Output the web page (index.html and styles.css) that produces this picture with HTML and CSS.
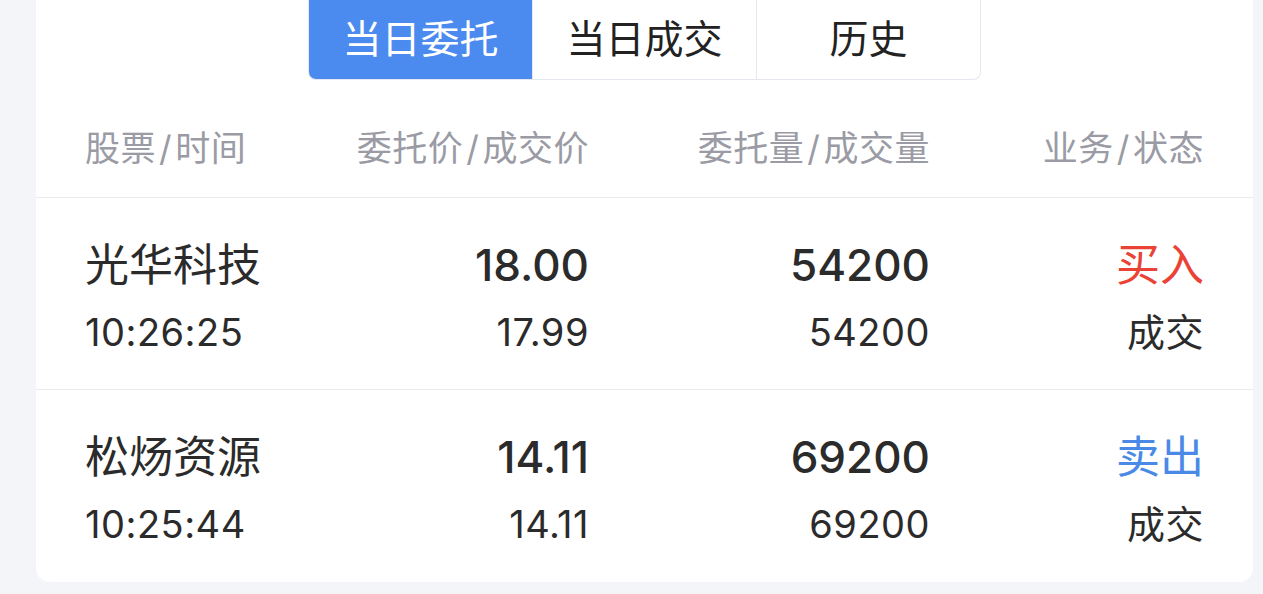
FILE: index.html
```html
<!DOCTYPE html>
<html lang="zh-CN">
<head>
  <meta charset="UTF-8">
  <title>当日委托</title>
  <link rel="stylesheet" href="styles.css">
</head>
<body>

<div class="card">
  <div class="tabs">
    <div class="tab active">当日委托</div>
    <div class="tab">当日成交</div>
    <div class="tab">历史</div>
  </div>

  <div class="table-head">
    <div class="col">股票<span class="sep">/</span>时间</div>
    <div class="col num">委托价<span class="sep">/</span>成交价</div>
    <div class="col num">委托量<span class="sep">/</span>成交量</div>
    <div class="col num">业务<span class="sep">/</span>状态</div>
  </div>

  <div class="order">
    <div class="col">
      <div class="main">光华科技</div>
      <div class="sub">10:26:25</div>
    </div>
    <div class="col num">
      <div class="main figure">18.00</div>
      <div class="sub">17.99</div>
    </div>
    <div class="col num">
      <div class="main figure">54200</div>
      <div class="sub">54200</div>
    </div>
    <div class="col num">
      <div class="main buy">买入</div>
      <div class="sub">成交</div>
    </div>
  </div>

  <div class="order">
    <div class="col">
      <div class="main">松炀资源</div>
      <div class="sub">10:25:44</div>
    </div>
    <div class="col num">
      <div class="main figure">14.11</div>
      <div class="sub">14.11</div>
    </div>
    <div class="col num">
      <div class="main figure">69200</div>
      <div class="sub">69200</div>
    </div>
    <div class="col num">
      <div class="main sell">卖出</div>
      <div class="sub">成交</div>
    </div>
  </div>
</div>

</body>
</html>
```

FILE: styles.css
```css
body {
  margin: 0;
  background: #f3f5f9;
  font-family: Inter, "Noto Sans CJK SC", sans-serif;
  color: #2b2b2b;
  overflow: hidden;
}
.card {
  background: #fff;
  margin: -20px 10px 0 36px;
  padding-top: 20px;
  border-radius: 14px;
  height: 582px;
}
.tabs {
  display: flex;
  width: 673px;
  height: 80px;
  margin: 0 auto;
  box-sizing: border-box;
  border: 1px solid #e4e7ee;
  border-top: none;
  border-radius: 0 0 8px 8px;
  overflow: hidden;
}
.tab {
  flex: 1;
  display: flex;
  align-items: center;
  justify-content: center;
  padding-bottom: 7px;
  font-size: 39px;
  color: #222;
  border-left: 1px solid #e4e7ee;
}
.tab:first-child {
  border-left: none;
}
.tab.active {
  background: #4b8bef;
  color: #fff;
}
.table-head, .order {
  display: grid;
  grid-template-columns: 250px 254px 341px 274px;
  padding: 0 49px;
  border-bottom: 1px solid #ebebee;
}
.table-head {
  height: 118px;
  padding-top: 14px;
  box-sizing: border-box;
  align-items: center;
  font-size: 35px;
  letter-spacing: 0.5px;
  color: #9a9ba5;
}
.sep {
  margin: 0 3px;
}
.order {
  padding-top: 35px;
  padding-bottom: 25px;
}
.order:last-child {
  border-bottom: none;
}
.num {
  text-align: right;
}
.main {
  font-size: 44px;
  line-height: 64px;
}
.figure {
  font-weight: 500;
}
.sub {
  font-size: 38px;
  letter-spacing: 0.5px;
  line-height: 64px;
  padding-top: 3px;
}
.buy {
  color: #ea4335;
}
.sell {
  color: #4a8ae6;
}
```
